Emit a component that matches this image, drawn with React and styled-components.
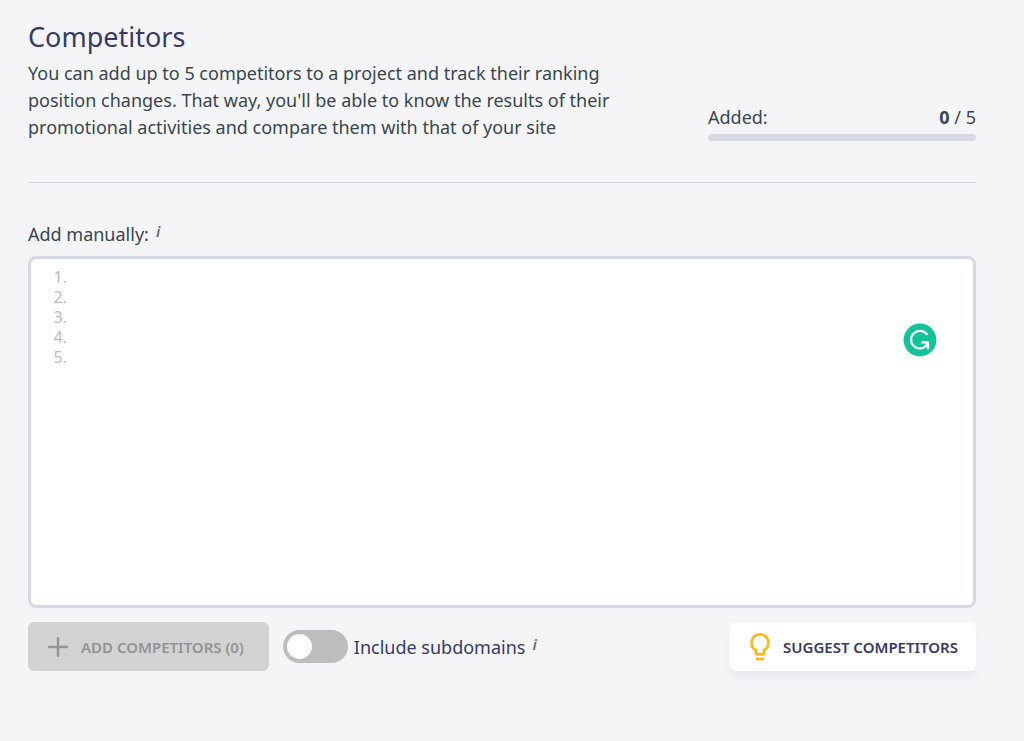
import React, { useState } from "react";
import styled, { createGlobalStyle } from "styled-components";

const LIMIT = 5;

const CompetitorsPage = () => {
  const [text, setText] = useState("");
  const [subdomains, setSubdomains] = useState(false);

  const count = text.split("\n").filter((line) => line.trim()).length;
  const rows = Array.from({ length: LIMIT }, (_, index) => index + 1);

  return (
    <>
      <GlobalStyle />
      <Wrapper>
        <Header>
          <Intro>
            <Title>Competitors</Title>
            <Description>
              You can add up to 5 competitors to a project and track their ranking
              <br />
              position changes. That way, you'll be able to know the results of their
              <br />
              promotional activities and compare them with that of your site
            </Description>
          </Intro>
          <Added>
            <AddedRow>
              <span>Added:</span>
              <span>
                <b>0</b> / {LIMIT}
              </span>
            </AddedRow>
            <Bar />
          </Added>
        </Header>

        <LabelRow>
          <label htmlFor="competitors">Add manually:</label>
          <Info>i</Info>
        </LabelRow>
        <Editor>
          <Numbers>
            {rows.map((row) => (
              <li key={row}>{row}.</li>
            ))}
          </Numbers>
          <TextArea
            id="competitors"
            spellCheck={false}
            value={text}
            onChange={(e) => setText(e.target.value)}
          />
          <Checker viewBox="0 0 34 34" aria-hidden="true">
            <circle cx="17" cy="17" r="16.4" fill="#15c39a" />
            <path
              d="M23.8 11.2A8.8 8.8 0 1 0 23.6 22.4M19 19.4H25V25.4M25 19.6L22.6 22.8"
              fill="none"
              stroke="#fff"
              strokeWidth="2.2"
              strokeLinecap="round"
              strokeLinejoin="round"
            />
          </Checker>
        </Editor>

        <Footer>
          <AddButton type="button" disabled={count === 0}>
            <PlusIcon viewBox="0 0 20 20" aria-hidden="true">
              <path d="M10 1.2V18.8M1.2 10H18.8" stroke="currentColor" strokeWidth="2.4" strokeLinecap="round" />
            </PlusIcon>
            ADD COMPETITORS ({count})
          </AddButton>
          <ToggleLabel>
            <Toggle
              type="checkbox"
              checked={subdomains}
              onChange={(e) => setSubdomains(e.target.checked)}
            />
            Include subdomains
          </ToggleLabel>
          <Info>i</Info>
          <SuggestButton type="button">
            <BulbIcon viewBox="0 0 20 28" aria-hidden="true">
              <path
                d="M6 21.2V17.2C3.1 15.6 1.5 12.9 1.5 9.8A8.5 8.5 0 0 1 18.5 9.8C18.5 12.9 16.9 15.6 14 17.2V21.2Z"
                fill="none"
                stroke="#ffb60f"
                strokeWidth="2.6"
                strokeLinejoin="round"
              />
              <path d="M6 26H14" stroke="#ffb60f" strokeWidth="2.6" />
            </BulbIcon>
            SUGGEST COMPETITORS
          </SuggestButton>
        </Footer>
      </Wrapper>
    </>
  );
};

const GlobalStyle = createGlobalStyle`
  * {
    box-sizing: border-box;
  }

  body {
    margin: 0;
    background-color: #f5f5f8;
    color: #37474f;
    font-family: "Noto Sans", "Open Sans", sans-serif;
    font-size: 18px;
  }
`;

const Wrapper = styled.main`
  padding: 16px 48px 48px 28px;
`;

const Header = styled.header`
  display: flex;
  justify-content: space-between;
  align-items: flex-end;
  gap: 24px;
  padding-bottom: 41px;
  border-bottom: 1px solid #d4d6e3;
`;

const Intro = styled.div`
  flex: 1;
`;

const Title = styled.h1`
  margin: 0 0 2px;
  color: #363b64;
  font-size: 27px;
  font-weight: 400;
  line-height: 42px;
`;

const Description = styled.p`
  margin: 0;
  line-height: 27px;
`;

const Added = styled.div`
  width: 268px;
`;

const AddedRow = styled.div`
  display: flex;
  justify-content: space-between;
  line-height: 34px;
`;

const Bar = styled.div`
  height: 7px;
  border-radius: 4px;
  background-color: #d6d8e4;
`;

const LabelRow = styled.div`
  display: flex;
  align-items: center;
  gap: 7px;
  margin-top: 37px;
  line-height: 28px;
`;

const Info = styled.sup`
  align-self: flex-start;
  color: #607080;
  font-size: 15px;
  font-style: italic;
  font-weight: 600;
  line-height: 22px;
`;

const Editor = styled.div`
  position: relative;
  display: flex;
  height: 352px;
  margin-top: 8px;
  padding: 8px;
  border: 3px solid #d6d8e4;
  border-radius: 8px;
  background-color: #fff;
`;

const Numbers = styled.ol`
  width: 28px;
  margin: 0;
  padding: 0;
  color: #bdbdbd;
  font-size: 16px;
  line-height: 20px;
  list-style: none;
  text-align: right;
`;

const TextArea = styled.textarea`
  flex: 1;
  padding: 0 8px;
  border: none;
  outline: none;
  background-color: transparent;
  color: inherit;
  font: inherit;
  font-size: 16px;
  line-height: 20px;
  resize: none;
`;

const Checker = styled.svg`
  position: absolute;
  top: 64px;
  right: 36px;
  width: 34px;
  height: 34px;
`;

const Footer = styled.div`
  display: flex;
  align-items: center;
  margin-top: 14px;

  ${Info} {
    margin-left: 7px;
    line-height: 44px;
  }
`;

const Button = styled.button`
  display: flex;
  align-items: center;
  gap: 13px;
  height: 49px;
  border: none;
  border-radius: 6px;
  font-family: inherit;
  font-size: 15px;
  font-weight: 600;
  white-space: nowrap;
`;

const AddButton = styled(Button)`
  padding: 0 25px 0 20px;
  background-color: #d2d2d2;
  color: #939393;
`;

const SuggestButton = styled(Button)`
  margin-left: auto;
  padding: 0 18px 0 20px;
  background-color: #fff;
  box-shadow: 0 9px 4px -1px #ebebf0;
  color: #363b64;
`;

const PlusIcon = styled.svg`
  width: 20px;
  height: 20px;
`;

const BulbIcon = styled.svg`
  width: 20px;
  height: 28px;
`;

const ToggleLabel = styled.label`
  display: flex;
  align-items: center;
  gap: 6px;
  margin-left: 14px;
  color: #363b64;
`;

const Toggle = styled.input`
  appearance: none;
  display: flex;
  align-items: center;
  width: 65px;
  height: 33px;
  margin: 0;
  padding: 0 4px;
  border-radius: 17px;
  background-color: #bdbdbd;

  &::before {
    content: "";
    width: 25px;
    height: 25px;
    border-radius: 50%;
    background-color: #fff;
  }

  &:checked {
    justify-content: flex-end;
    background-color: #363b64;
  }
`;

export default CompetitorsPage;
